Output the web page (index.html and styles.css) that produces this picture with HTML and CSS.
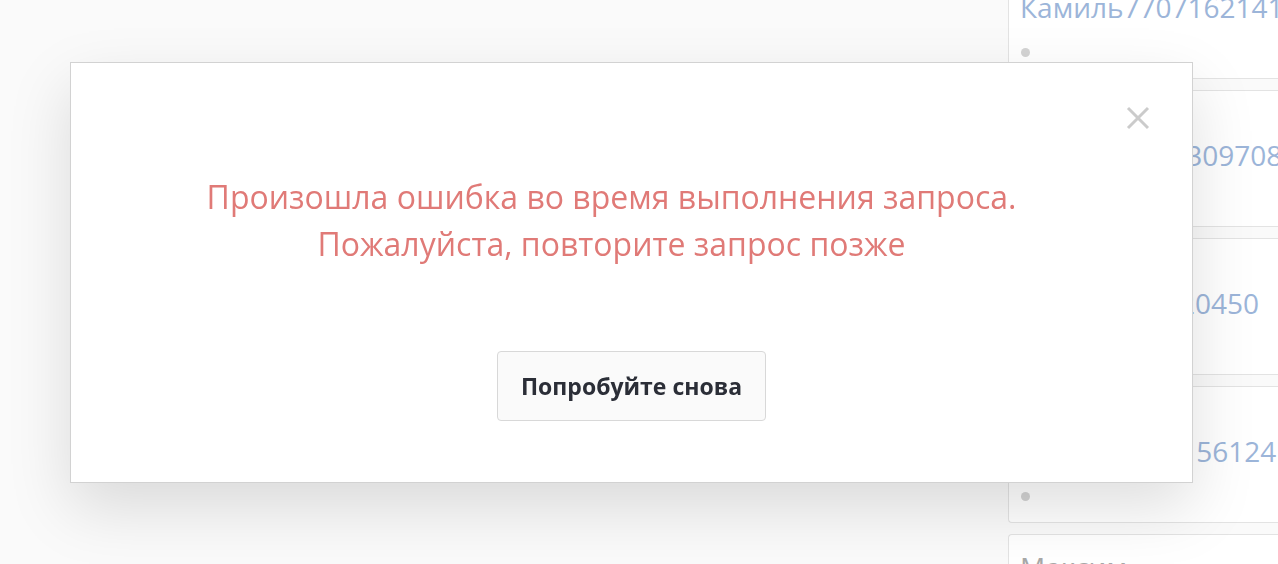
FILE: index.html
```html
<!DOCTYPE html>
<html lang="ru">
<head>
<meta charset="utf-8">
<title>Ошибка</title>
<link rel="stylesheet" href="styles.css">
</head>
<body>
<div class="page">
  <main class="main"></main>
  <aside class="sidebar">
    <div class="card"><a class="card-link">Камиль7707162141</a><span class="dot"></span></div>
    <div class="card"><a class="card-link">Андрей7903309708</a><span class="dot"></span></div>
    <div class="card"><a class="card-link">Глеб79165520450</a><span class="dot"></span></div>
    <div class="card"><a class="card-link">Сергей7926156124</a><span class="dot"></span></div>
    <div class="card card-plain"><span class="card-name">Максим</span></div>
  </aside>
</div>

<div class="modal">
  <button class="modal-close" aria-label="Закрыть">
    <svg width="24" height="24" viewBox="0 0 24 24"><path d="M2 2 L22 22 M22 2 L2 22" stroke="#cbcbcb" stroke-width="3" fill="none"/></svg>
  </button>
  <div class="modal-body">
    <p class="modal-message">Произошла ошибка во время выполнения запроса.<br>Пожалуйста, повторите запрос позже</p>
    <button class="retry-btn">Попробуйте снова</button>
  </div>
</div>
</body>
</html>
```

FILE: styles.css
```css
html, body {
  margin: 0;
  padding: 0;
  height: 100%;
  overflow: hidden;
}
body {
  background: #fafafa;
  font-family: "Open Sans", "Noto Sans", sans-serif;
}
.page {
  display: flex;
  height: 564px;
}
.main {
  width: 1008px;
  flex: none;
}
.sidebar {
  flex: 1;
  display: flex;
  flex-direction: column;
  gap: 11px;
  margin-top: -58px;
  min-width: 0;
}
.card {
  height: 137px;
  flex: none;
  box-sizing: border-box;
  background: #fff;
  border: 1px solid #e3e3e3;
  border-right: none;
  border-radius: 4px 0 0 4px;
  padding: 46px 0 0 11px;
  display: flex;
  flex-direction: column;
  white-space: nowrap;
}
.card-link {
  font-size: 28px;
  line-height: 36px;
  color: #9cb5d9;
}
.dot {
  width: 9px;
  height: 9px;
  border-radius: 50%;
  background: #d4d4d4;
  margin: 23px 0 0 1px;
}
.card-plain {
  padding-top: 14px;
}
.card-name {
  font-size: 28px;
  line-height: 36px;
  color: #a8a8a8;
}
.modal {
  position: fixed;
  left: 70px;
  top: 62px;
  width: 1123px;
  height: 421px;
  box-sizing: border-box;
  background: #fff;
  border: 1px solid #d2d2d2;
  box-shadow: 0 25px 60px rgba(0, 0, 0, 0.13);
}
.modal-close {
  position: absolute;
  right: 42px;
  top: 43px;
  width: 24px;
  height: 24px;
  padding: 0;
  border: none;
  background: none;
}
.modal-body {
  display: flex;
  flex-direction: column;
  align-items: center;
  padding-top: 110px;
}
.modal-message {
  margin: 0 40px 0 0;
  text-align: center;
  font-size: 32px;
  line-height: 47px;
  color: #e07a77;
}
.retry-btn {
  margin-top: 84px;
  width: 269px;
  height: 70px;
  box-sizing: border-box;
  border: 1px solid #d8d8d8;
  border-radius: 4px;
  background: #fafafa;
  font-family: "Open Sans", "Noto Sans", sans-serif;
  font-weight: 700;
  font-size: 23px;
  color: #2b2e37;
}
```
